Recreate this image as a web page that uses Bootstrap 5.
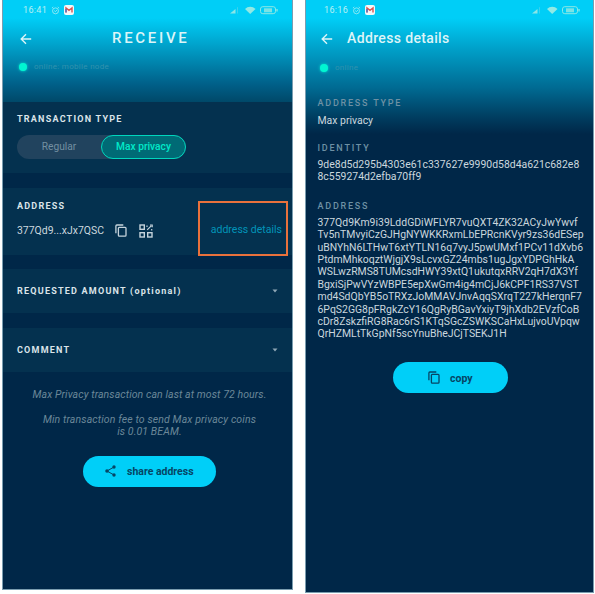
<!DOCTYPE html>
<html lang="en">
<head>
<meta charset="utf-8">
<meta name="viewport" content="width=device-width, initial-scale=1">
<title>Beam wallet</title>
<link href="https://cdn.jsdelivr.net/npm/bootstrap@5.3.0/dist/css/bootstrap.min.css" rel="stylesheet">
<style>
body{width:595px;height:594px;overflow:hidden;background:#fff;font-family:Roboto,"Liberation Sans",sans-serif;font-size:10.45px;line-height:12.4px;color:#c5d3dc}
svg{display:block;flex:none}
.phone{background-color:#002748;background-repeat:no-repeat;border:1px solid #7a9db0;border-top:0;white-space:nowrap}
.phone-a{width:291px;height:590px;margin-left:2px;background-image:linear-gradient(#00cef7 0,#00cef7 18px,#00a4cd 44px,#006089 84px,#004767 103px,#002748 132px)}
.phone-b{width:289px;height:593px;margin-left:12px;background-image:linear-gradient(#00cef7 0,#00cef7 18px,#00a4cd 46px,#006a92 88px,#003f62 116px,#002748 134px)}
.status{height:20px;color:#b9f0f3;font-size:9px;letter-spacing:.35px}
.topbar{height:37px;color:#dcf5f8}
.ttl-a{font-size:15px;letter-spacing:2.7px;font-weight:500;margin-left:80px}
.ttl-b{font-size:14px;letter-spacing:.36px;font-weight:500;margin-left:14px}
.online{height:20px;font-size:8px;letter-spacing:.3px;color:#3192ae}
.dot{width:8px;height:8px;border-radius:50%;background:#00f6d2;box-shadow:0 0 3px #00e5d0}
.panel{background:#04314f;padding-left:14px}
.cap{font-size:9px;line-height:12px;font-weight:700;letter-spacing:1.23px;color:#dbe4e9}
.sub{font-size:9px;line-height:12px;font-weight:500;letter-spacing:1.78px;color:#6e91a4}
.seg{width:169px;height:24px;border-radius:12px;background:#21435e;color:#738fa1;font-size:10.2px}
.seg-on{width:85px;height:24px;border-radius:13px;border:1.5px solid #00d6bd;background:#006a75;color:#00e9c9;font-weight:500}
.hl{width:90px;height:55px;border:2px solid #e9713c;color:#0294b9;font-size:10.5px}
.note{font-style:italic;color:#6b8799;font-size:10.5px;line-height:12.5px}
.pill{height:31px;border-radius:16px;background:#00cff8;color:#064565;font-weight:700;font-size:10.5px}
.key{color:#cbd7de}
.caret{color:#8fa7b6}
</style>
</head>
<body class="d-flex align-items-start">
<svg width="0" height="0" class="position-absolute"><defs>
<symbol id="clock" viewBox="0 0 10 10"><g fill="none" stroke="currentColor" stroke-width=".8"><circle cx="5" cy="5.4" r="3.3"/><path d="M1 2.4 2.5 1M9 2.4 7.500 1M3.600 5.200 5 6.200 6.600 4.500"/></g></symbol>
<symbol id="mail" viewBox="0 0 10 10"><rect width="10" height="10" rx="2" fill="#f5f7f8"/><path d="M2 7.500V3l3 2.300L8 3v4.500" fill="none" stroke="#d9534f" stroke-width="1.400"/><path d="M2 4v3.500" stroke="#4d74c9" stroke-width="1.400"/></symbol>
<symbol id="signal" viewBox="0 0 48 10"><path d="M0 8.500 5.500 4v4.500z" fill="#8be5e6"/><path d="M7 8.500V2.500l1-.8v6.800z" fill="#39d2ef"/><path d="M15 4a7.500 7.500 0 0 1 10.500 0L20.200 9z" fill="#92e9e4"/><rect x="30.500" y="1.700" width="15" height="7" rx="2.300" fill="none" stroke="#8be8e6"/><rect x="34" y="3.300" width="8" height="4" fill="#7be3e4"/><path d="M47 4v2.500" stroke="#8be8e6" stroke-width="1.300"/></symbol>
<symbol id="back" viewBox="0 0 12 12"><path d="M11.200 6H1.200M6 1.200 1.200 6 6 10.800" fill="none" stroke="currentColor" stroke-width="1.400"/></symbol>
<symbol id="copy" viewBox="0 0 12 13"><g fill="none" stroke="currentColor" stroke-width="1.300"><path d="M.9 9.200V2q0-1 1-1h6.400"/><rect x="3.400" y="3.300" width="7.600" height="8.900" rx=".9"/></g></symbol>
<symbol id="qr" viewBox="0 0 14 14"><g fill="none" stroke="currentColor" stroke-width="1.400"><rect x="1" y="1" width="4.300" height="4.300"/><rect x="1" y="8.700" width="4.300" height="4.300"/><rect x="8.700" y="8.700" width="4.300" height="4.300"/><path d="M8 1.500v1.500M8.200 5.900l4-4M11 1h2.200v2.200M12.700 5v1.400" stroke-width="1.200"/></g></symbol>
<symbol id="share" viewBox="0 0 11 12"><path d="M9 2 2 6l7 4" fill="none" stroke="currentColor"/><g fill="currentColor"><circle cx="9" cy="2" r="1.700"/><circle cx="2" cy="6" r="1.800"/><circle cx="9" cy="10" r="1.700"/></g></symbol>
<symbol id="caret" viewBox="0 0 6 4"><path d="M.5.500h5L3 3.500z" fill="currentColor"/></symbol>
</defs></svg>

<main class="phone phone-a">
  <div class="status d-flex align-items-center" style="padding-left:20px">
    <span style="width:28px">16:41</span>
    <svg width="9" height="9"><use href="#clock"/></svg>
    <svg class="ms-1" width="10" height="10"><use href="#mail"/></svg>
    <svg class="ms-auto" style="margin-right:14px" width="48" height="10"><use href="#signal"/></svg>
  </div>
  <div class="topbar d-flex align-items-center" style="padding-left:17px">
    <svg width="12" height="12"><use href="#back"/></svg><span class="ttl-a">RECEIVE</span>
  </div>
  <div class="online d-flex align-items-center" style="padding-left:16px"><i class="dot"></i><span style="margin-left:7px">online: mobile node</span></div>
  <div class="panel" style="margin-top:25px;height:71px;padding-top:11px">
    <div class="cap">TRANSACTION TYPE</div>
    <div class="seg d-flex align-items-center justify-content-between" style="margin-top:10px">
      <span class="flex-grow-1 text-center">Regular</span>
      <span class="seg-on d-flex align-items-center justify-content-center">Max privacy</span>
    </div>
  </div>
  <div class="panel d-flex justify-content-between" style="margin-top:15px;height:67px">
    <div style="padding-top:12px">
      <div class="cap">ADDRESS</div>
      <div class="d-flex align-items-center" style="margin-top:10px;height:17px">
        <span class="key" style="padding-top:1px">377Qd9...xJx7QSC</span>
        <svg style="margin-left:11px" width="12" height="13"><use href="#copy"/></svg>
        <svg style="margin-left:12px" width="14" height="14"><use href="#qr"/></svg>
      </div>
    </div>
    <div class="hl d-flex align-items-center justify-content-end" style="margin:13px 4px 0 0;padding:4px 4px 0 0">address details</div>
  </div>
  <div class="panel d-flex align-items-center justify-content-between" style="margin-top:14px;height:44px;padding-right:14px">
    <span class="cap">REQUESTED AMOUNT (optional)</span><svg class="caret" width="6" height="4"><use href="#caret"/></svg>
  </div>
  <div class="panel d-flex align-items-center justify-content-between" style="margin-top:15px;height:44px;padding-right:14px">
    <span class="cap">COMMENT</span><svg class="caret" width="6" height="4"><use href="#caret"/></svg>
  </div>
  <div class="note text-center" style="margin-top:17px;padding-left:4px">
    <div style="letter-spacing:.09px">Max Privacy transaction can last at most 72 hours.</div>
    <div style="margin-top:12px;letter-spacing:.12px">Min transaction fee to send Max privacy coins<br>is 0.01 BEAM.</div>
  </div>
  <div class="pill d-flex align-items-center" style="width:133px;margin:17px 0 0 80px;padding-left:22px">
    <svg width="11" height="12"><use href="#share"/></svg><span style="margin-left:11px;padding-top:2px">share address</span>
  </div>
</main>

<section class="phone phone-b">
  <div class="status d-flex align-items-center" style="padding-left:18px">
    <span style="width:28px">16:16</span>
    <svg width="9" height="9"><use href="#clock"/></svg>
    <svg class="ms-1" width="10" height="10"><use href="#mail"/></svg>
    <svg class="ms-auto" style="margin-right:13px" width="48" height="10"><use href="#signal"/></svg>
  </div>
  <div class="topbar d-flex align-items-center" style="padding-left:15px">
    <svg width="12" height="12"><use href="#back"/></svg><span class="ttl-b">Address details</span>
  </div>
  <div class="online d-flex align-items-center" style="padding:2px 0 0 14px"><i class="dot"></i><span style="margin-left:7px">online</span></div>
  <div style="padding:20px 0 0 11.5px">
    <div class="sub">ADDRESS TYPE</div>
    <div class="key" style="margin-top:5.500px">Max privacy</div>
    <div class="sub" style="margin-top:15px">IDENTITY</div>
    <div class="key" style="margin-top:5px">9de8d5d295b4303e61c337627e9990d58d4a621c682e8<br>8c559274d2efba70ff9</div>
    <div class="sub" style="margin-top:16px">ADDRESS</div>
    <div class="key" style="margin-top:5px">377Qd9Km9i39LddGDiWFLYR7vuQXT4ZK32ACyJwYwvf<br>Tv5nTMvyiCzGJHgNYWKKRxmLbEPRcnKVyr9zs36dESep<br>uBNYhN6LTHwT6xtYTLN16q7vyJ5pwUMxf1PCv11dXvb6<br>PtdmMhkoqztWjgjX9sLcvxGZ24mbs1ugJgxYDPGhHkA<br>WSLwzRMS8TUMcsdHWY39xtQ1ukutqxRRV2qH7dX3Yf<br>BgxiSjPwVYzWBPE5epXwGm4ig4mCjJ6kCPF1RS37VST<br>md4SdQbYB5oTRXzJoMMAVJnvAqqSXrqT227kHerqnF7<br>6PqS2GG8pFRgkZcY16QgRyBGavYxiyT9jhXdb2EVzfCoB<br>cDr8ZskzfiRG8Rac6rS1KTqSGcZSWKSCaHxLujvoUVpqw<br>QrHZMLtTkGpNf5scYnuBheJCjTSEKJ1H</div>
  </div>
  <div class="pill d-flex align-items-center" style="width:115px;margin:21.500px 0 0 87px;padding-left:35px">
    <svg width="12" height="13"><use href="#copy"/></svg><span style="margin-left:10px;padding-top:2px">copy</span>
  </div>
</section>
<script src="https://cdn.jsdelivr.net/npm/bootstrap@5.3.0/dist/js/bootstrap.bundle.min.js"></script>
</body>
</html>
